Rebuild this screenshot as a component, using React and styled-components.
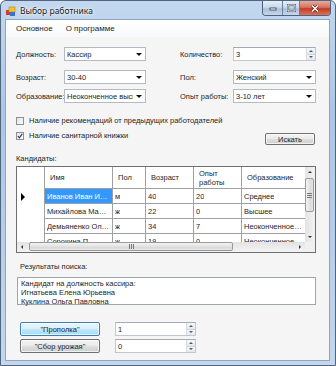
import React from 'react';
import styled, { createGlobalStyle } from 'styled-components';

const GlobalStyle = createGlobalStyle`
  html, body {
    margin: 0;
    padding: 0;
    background: #ffffff;
  }
  body {
    font-family: "Liberation Sans", "Noto Sans", Arial, sans-serif;
    font-size: 7.5px;
    color: #1e1e1e;
  }
`;

const Window = styled.div`
  width: 336px;
  height: 366px;
  box-sizing: border-box;
  display: flex;
  flex-direction: column;
  border: 1px solid #4f6580;
  border-radius: 6px 6px 0 0;
  background: linear-gradient(180deg, #c3d8ef 0%, #adc6e4 30%, #b9cfe9 70%, #c4d7ed 100%);
  overflow: hidden;
`;

const TitleBar = styled.div`
  height: 19px;
  display: flex;
  align-items: center;
  padding: 0 4px 0 5px;
`;

const TitleText = styled.span`
  margin-left: 4px;
  font-family: "Noto Sans", "Liberation Sans", sans-serif;
  font-size: 8.5px;
  color: #1b1b1b;
  text-shadow: 0 0 4px #ffffff, 0 0 2px #ffffff;
`;

const Controls = styled.div`
  margin-left: auto;
  align-self: flex-start;
  display: flex;
  border: 1px solid #50627a;
  border-top: none;
  border-radius: 0 0 4px 4px;
  overflow: hidden;
`;

const CtrlButton = styled.div`
  width: ${({ $w }) => $w}px;
  height: 14px;
  display: flex;
  align-items: center;
  justify-content: center;
  box-sizing: border-box;
  border-left: ${({ $first }) => ($first ? 'none' : '1px solid #6a7f98')};
  background: ${({ $close }) =>
    $close
      ? 'linear-gradient(180deg, #e9a99c 0%, #d47462 45%, #c43c22 55%, #d9735c 100%)'
      : 'linear-gradient(180deg, #e6eef8 0%, #c9d9ec 45%, #a9c0dc 55%, #c4d6ec 100%)'};
`;

const Client = styled.div`
  flex: 1;
  margin: 0 6px 5px 5px;
  display: flex;
  flex-direction: column;
  background: #f5f5f5;
  box-shadow: 0 0 0 1px #8ea5c2;
`;

const MenuBar = styled.div`
  height: 17px;
  display: flex;
  align-items: center;
  gap: 13px;
  padding-left: 10px;
  background: linear-gradient(180deg, #ffffff 0%, #f8f9fb 100%);
`;

const MenuItem = styled.span`
  font-size: 8px;
  color: #1e1e1e;
`;

const Form = styled.div`
  display: flex;
  flex-direction: column;
  padding: 0 13px 0 10px;
`;

const FieldRow = styled.div`
  display: grid;
  grid-template-columns: 48px 82px 34px 53px 83px;
  height: 14px;
  align-items: center;
  margin-top: ${({ $top }) => $top}px;
`;

const Label = styled.span`
  white-space: nowrap;
`;

const Combo = styled.div`
  height: 14px;
  box-sizing: border-box;
  border: 1px solid #b5b9c2;
  background: #ffffff;
  display: flex;
  align-items: center;
  padding-left: 2px;
  position: relative;
  overflow: hidden;
`;

const ComboText = styled.span`
  flex: 1;
  white-space: nowrap;
  overflow: hidden;
  margin-right: 12px;
`;

const Arrow = styled.span`
  position: absolute;
  right: 3px;
  top: 5px;
  width: 0;
  height: 0;
  border-left: 3px solid transparent;
  border-right: 3px solid transparent;
  border-top: 3px solid #111;
`;

const NumBox = styled.div`
  width: ${({ $w }) => ($w ? `${$w}px` : 'auto')};
  height: 14px;
  box-sizing: border-box;
  border: 1px solid #c2c6cf;
  border-top-color: #a6aab3;
  background: #ffffff;
  display: flex;
  align-items: center;
  padding-left: 2px;
`;

const NumText = styled.span`
  flex: 1;
`;

const Spinner = styled.div`
  width: 8px;
  height: 12px;
  display: flex;
  flex-direction: column;
  border-left: 1px solid #d8dbe2;
`;

const SpinHalf = styled.div`
  flex: 1;
  display: flex;
  align-items: center;
  justify-content: center;
  background: linear-gradient(180deg, #f6f7f9, #e4e7ec);
  border-bottom: ${({ $up }) => ($up ? '1px solid #d0d4dc' : 'none')};

  &::after {
    content: '';
    border-left: 2px solid transparent;
    border-right: 2px solid transparent;
    ${({ $up }) => ($up ? 'border-bottom: 2px solid #4a5a70;' : 'border-top: 2px solid #4a5a70;')}
  }
`;

const CheckRow = styled.div`
  height: 12px;
  display: flex;
  align-items: flex-start;
  margin-top: ${({ $top }) => $top}px;
`;

const CheckBox = styled.div`
  width: 8px;
  height: 8px;
  margin-top: 2px;
  box-sizing: border-box;
  border: 1px solid #8e8f8f;
  background: linear-gradient(135deg, #e4e4e4, #fbfbfb);
  display: flex;
  align-items: center;
  justify-content: center;
`;

const CheckLabel = styled.span`
  margin-left: 5px;
  line-height: 12px;
`;

const Button = styled.div`
  width: ${({ $w }) => $w}px;
  height: ${({ $h }) => $h}px;
  flex-shrink: 0;
  margin-top: ${({ $mt }) => $mt || 0}px;
  margin-right: ${({ $mr }) => $mr || 0}px;
  box-sizing: border-box;
  border: 1px solid ${({ $focus }) => ($focus ? '#3c7fb1' : '#707070')};
  border-radius: 2px;
  background: ${({ $focus }) =>
    $focus
      ? 'linear-gradient(180deg, #eaf6fd 0%, #d9f0fc 45%, #bee6fd 55%, #a7d9f5 100%)'
      : 'linear-gradient(180deg, #f2f2f2 0%, #ebebeb 45%, #dddddd 55%, #cfcfcf 100%)'};
  box-shadow: inset 0 0 0 1px rgba(255, 255, 255, 0.7);
  display: flex;
  align-items: center;
  justify-content: center;
  white-space: nowrap;
`;

const SectionLabel = styled.div`
  line-height: 10px;
  margin-top: ${({ $top }) => $top}px;
  padding-left: ${({ $indent }) => $indent || 0}px;
`;

const GridBox = styled.div`
  margin-top: 2px;
  height: 87px;
  box-sizing: border-box;
  border: 1px solid #6e6e6e;
  display: grid;
  grid-template-columns: 1fr 10px;
  grid-template-rows: 1fr 10px;
  background: #ababab;
`;

const Viewport = styled.div`
  overflow: hidden;
  display: grid;
  grid-template-columns: 28px 68px 33px 48px 48px 64px;
  grid-auto-rows: 15px;
  grid-template-rows: 22px;
  background: #ffffff;
`;

const Cell = styled.div`
  min-width: 0;
  box-sizing: border-box;
  border-right: 1px solid #a0a0a0;
  border-bottom: ${({ $rowHead }) => ($rowHead ? 'none' : '1px solid #a0a0a0')};
  padding: 0 2px 0 ${({ $head }) => ($head ? 5 : 2)}px;
  display: flex;
  align-items: center;
  overflow: hidden;
  line-height: 9px;
  background: ${({ $selected }) => ($selected ? '#3399ff' : '#ffffff')};
  color: ${({ $selected }) => ($selected ? '#ffffff' : '#1e1e1e')};
`;

const CellText = styled.span`
  min-width: 0;
  overflow: hidden;
  text-overflow: ellipsis;
  white-space: ${({ $wrap }) => ($wrap ? 'normal' : 'nowrap')};
`;

const RowMarker = styled.span`
  width: 0;
  height: 0;
  margin-left: 2px;
  border-top: 4px solid transparent;
  border-bottom: 4px solid transparent;
  border-left: 4px solid #000;
`;

const ScrollBar = styled.div`
  display: flex;
  flex-direction: ${({ $vertical }) => ($vertical ? 'column' : 'row')};
  background: ${({ $vertical }) =>
    $vertical ? 'linear-gradient(90deg, #e3e3e3, #f3f3f3)' : 'linear-gradient(180deg, #e3e3e3, #f3f3f3)'};
`;

const arrowShapes = {
  up: 'border-left: 2px solid transparent; border-right: 2px solid transparent; border-bottom: 2px solid #333;',
  down: 'border-left: 2px solid transparent; border-right: 2px solid transparent; border-top: 2px solid #333;',
  left: 'border-top: 2px solid transparent; border-bottom: 2px solid transparent; border-right: 2px solid #333;',
  right: 'border-top: 2px solid transparent; border-bottom: 2px solid transparent; border-left: 2px solid #333;',
};

const ScrollArrow = styled.div`
  width: 10px;
  height: 10px;
  flex-shrink: 0;
  display: flex;
  align-items: center;
  justify-content: center;

  &::after {
    content: '';
    ${({ $dir }) => arrowShapes[$dir]}
  }
`;

const Thumb = styled.div`
  box-sizing: border-box;
  border: 1px solid #9a9a9a;
  border-radius: 2px;
  background: ${({ $vertical }) =>
    $vertical
      ? 'linear-gradient(90deg, #f3f3f3, #e2e2e2 50%, #d6d6d6 51%, #e6e6e6)'
      : 'linear-gradient(180deg, #f3f3f3, #e2e2e2 50%, #d6d6d6 51%, #e6e6e6)'};
  display: flex;
  align-items: center;
  justify-content: center;
  ${({ $vertical }) =>
    $vertical
      ? 'width: 9px; height: 34px; margin: 1px 0 0 0;'
      : 'height: 9px; width: 204px; margin: 0 0 0 2px;'}
`;

const Grip = styled.div`
  width: 5px;
  height: 5px;
  background: repeating-linear-gradient(
    ${({ $vertical }) => ($vertical ? '180deg' : '90deg')},
    #777 0 1px,
    transparent 1px 2px
  );
`;

const Spacer = styled.div`
  flex: 1;
`;

const Corner = styled.div`
  background: #f0f0f0;
`;

const ResultBox = styled.div`
  margin: 5px 0 0 1px;
  height: 28px;
  box-sizing: border-box;
  border: 1px solid #a0a4ad;
  background: #ffffff;
  padding: 1px 0 0 3px;
  line-height: 9px;
`;

const ButtonRow = styled.div`
  display: flex;
  align-items: center;
  gap: 15px;
  padding-left: 4px;
  margin-top: ${({ $top }) => $top}px;
`;

const AppIcon = () => (
  <svg width="10" height="10" viewBox="0 0 10 10">
    <rect x="0" y="4" width="5" height="5" fill="#d23a2a" />
    <rect x="3" y="1" width="6" height="5" fill="#f1c232" stroke="#b58b12" strokeWidth="0.6" />
    <rect x="4" y="6" width="5" height="4" fill="#3b6fd0" />
  </svg>
);

const Minimize = () => (
  <svg width="8" height="6" viewBox="0 0 8 6">
    <rect x="1" y="3" width="6" height="2" fill="#fff" stroke="#2d3a4b" strokeWidth="0.8" />
  </svg>
);

const Maximize = () => (
  <svg width="9" height="8" viewBox="0 0 9 8">
    <rect x="1" y="1" width="7" height="6" fill="none" stroke="#2d3a4b" strokeWidth="2.2" />
    <rect x="1" y="1" width="7" height="6" fill="none" stroke="#fff" strokeWidth="1" />
  </svg>
);

const CloseX = () => (
  <svg width="10" height="9" viewBox="0 0 10 9">
    <path d="M2 1.5 L8 7.5 M8 1.5 L2 7.5" stroke="#5a1a10" strokeWidth="2.8" />
    <path d="M2 1.5 L8 7.5 M8 1.5 L2 7.5" stroke="#fff" strokeWidth="1.6" />
  </svg>
);

const Tick = () => (
  <svg width="6" height="6" viewBox="0 0 6 6">
    <path d="M0.8 3.2 L2.4 4.8 L5.2 0.8" fill="none" stroke="#2a3f74" strokeWidth="1.2" />
  </svg>
);

const ComboBox = ({ value }) => (
  <Combo>
    <ComboText>{value}</ComboText>
    <Arrow />
  </Combo>
);

const NumericUpDown = ({ value, width }) => (
  <NumBox $w={width}>
    <NumText>{value}</NumText>
    <Spinner>
      <SpinHalf $up />
      <SpinHalf />
    </Spinner>
  </NumBox>
);

const columns = ['Имя', 'Пол', 'Возраст', 'Опыт работы', 'Образование'];

// visible (already truncated) cell texts, as the grid shows them
const candidates = [
  ['Иванов Иван И…', 'м', '40', '20', 'Среднее'],
  ['Михайлова Мар…', 'ж', '22', '0', 'Высшее'],
  ['Демьяненко Ол…', 'ж', '34', '7', 'Неоконченное в…'],
  ['Сорокина П…', 'ж', '19', '0', 'Неоконченное в…'],
];

const CandidatesGrid = () => (
  <GridBox>
    <Viewport>
      <Cell $rowHead />
      {columns.map((c) => (
        <Cell key={c} $head>
          <CellText $wrap>{c}</CellText>
        </Cell>
      ))}
      {candidates.map((row, i) => (
        <React.Fragment key={row[0]}>
          <Cell $rowHead>{i === 0 && <RowMarker />}</Cell>
          {row.map((v, j) => (
            <Cell key={j} $selected={i === 0 && j === 0}>
              <CellText>{v}</CellText>
            </Cell>
          ))}
        </React.Fragment>
      ))}
    </Viewport>
    <ScrollBar $vertical>
      <ScrollArrow $dir="up" />
      <Thumb $vertical>
        <Grip $vertical />
      </Thumb>
      <Spacer />
      <ScrollArrow $dir="down" />
    </ScrollBar>
    <ScrollBar>
      <ScrollArrow $dir="left" />
      <Thumb>
        <Grip />
      </Thumb>
      <Spacer />
      <ScrollArrow $dir="right" />
    </ScrollBar>
    <Corner />
  </GridBox>
);

export default function App() {
  return (
    <>
      <GlobalStyle />
      <Window>
        <TitleBar>
          <AppIcon />
          <TitleText>Выбор работника</TitleText>
          <Controls>
            <CtrlButton $w={19} $first>
              <Minimize />
            </CtrlButton>
            <CtrlButton $w={17}>
              <Maximize />
            </CtrlButton>
            <CtrlButton $w={31} $close>
              <CloseX />
            </CtrlButton>
          </Controls>
        </TitleBar>
        <Client>
          <MenuBar>
            <MenuItem>Основное</MenuItem>
            <MenuItem>О программе</MenuItem>
          </MenuBar>
          <Form>
            <FieldRow $top={10}>
              <Label>Должность:</Label>
              <ComboBox value="Кассир" />
              <span />
              <Label>Количество:</Label>
              <NumericUpDown value="3" />
            </FieldRow>
            <FieldRow $top={9}>
              <Label>Возраст:</Label>
              <ComboBox value="30-40" />
              <span />
              <Label>Пол:</Label>
              <ComboBox value="Женский" />
            </FieldRow>
            <FieldRow $top={5}>
              <Label>Образование:</Label>
              <ComboBox value="Неоконченное высшее" />
              <span />
              <Label>Опыт работы:</Label>
              <ComboBox value="3-10 лет" />
            </FieldRow>

            <CheckRow $top={12}>
              <CheckBox />
              <CheckLabel>Наличие рекомендаций от предыдущих работодателей</CheckLabel>
            </CheckRow>
            <CheckRow $top={3}>
              <CheckBox>
                <Tick />
              </CheckBox>
              <CheckLabel>Наличие санитарной книжки</CheckLabel>
              <Spacer />
              <Button $w={50} $h={12} $mt={3} $mr={1}>
                Искать
              </Button>
            </CheckRow>

            <SectionLabel $top={12}>Кандидаты:</SectionLabel>
            <CandidatesGrid />

            <SectionLabel $top={9} $indent={4}>
              Результаты поиска:
            </SectionLabel>
            <ResultBox>
              <div>Кандидат на должность кассира:</div>
              <div>Игнатьева Елена Юрьевна</div>
              <div>Куклина Ольга Павловна</div>
            </ResultBox>

            <ButtonRow $top={17}>
              <Button $w={80} $h={14} $focus>
                "Прополка"
              </Button>
              <NumericUpDown value="1" width={81} />
            </ButtonRow>
            <ButtonRow $top={3}>
              <Button $w={80} $h={14}>
                "Сбор урожая"
              </Button>
              <NumericUpDown value="0" width={81} />
            </ButtonRow>
          </Form>
        </Client>
      </Window>
    </>
  );
}
